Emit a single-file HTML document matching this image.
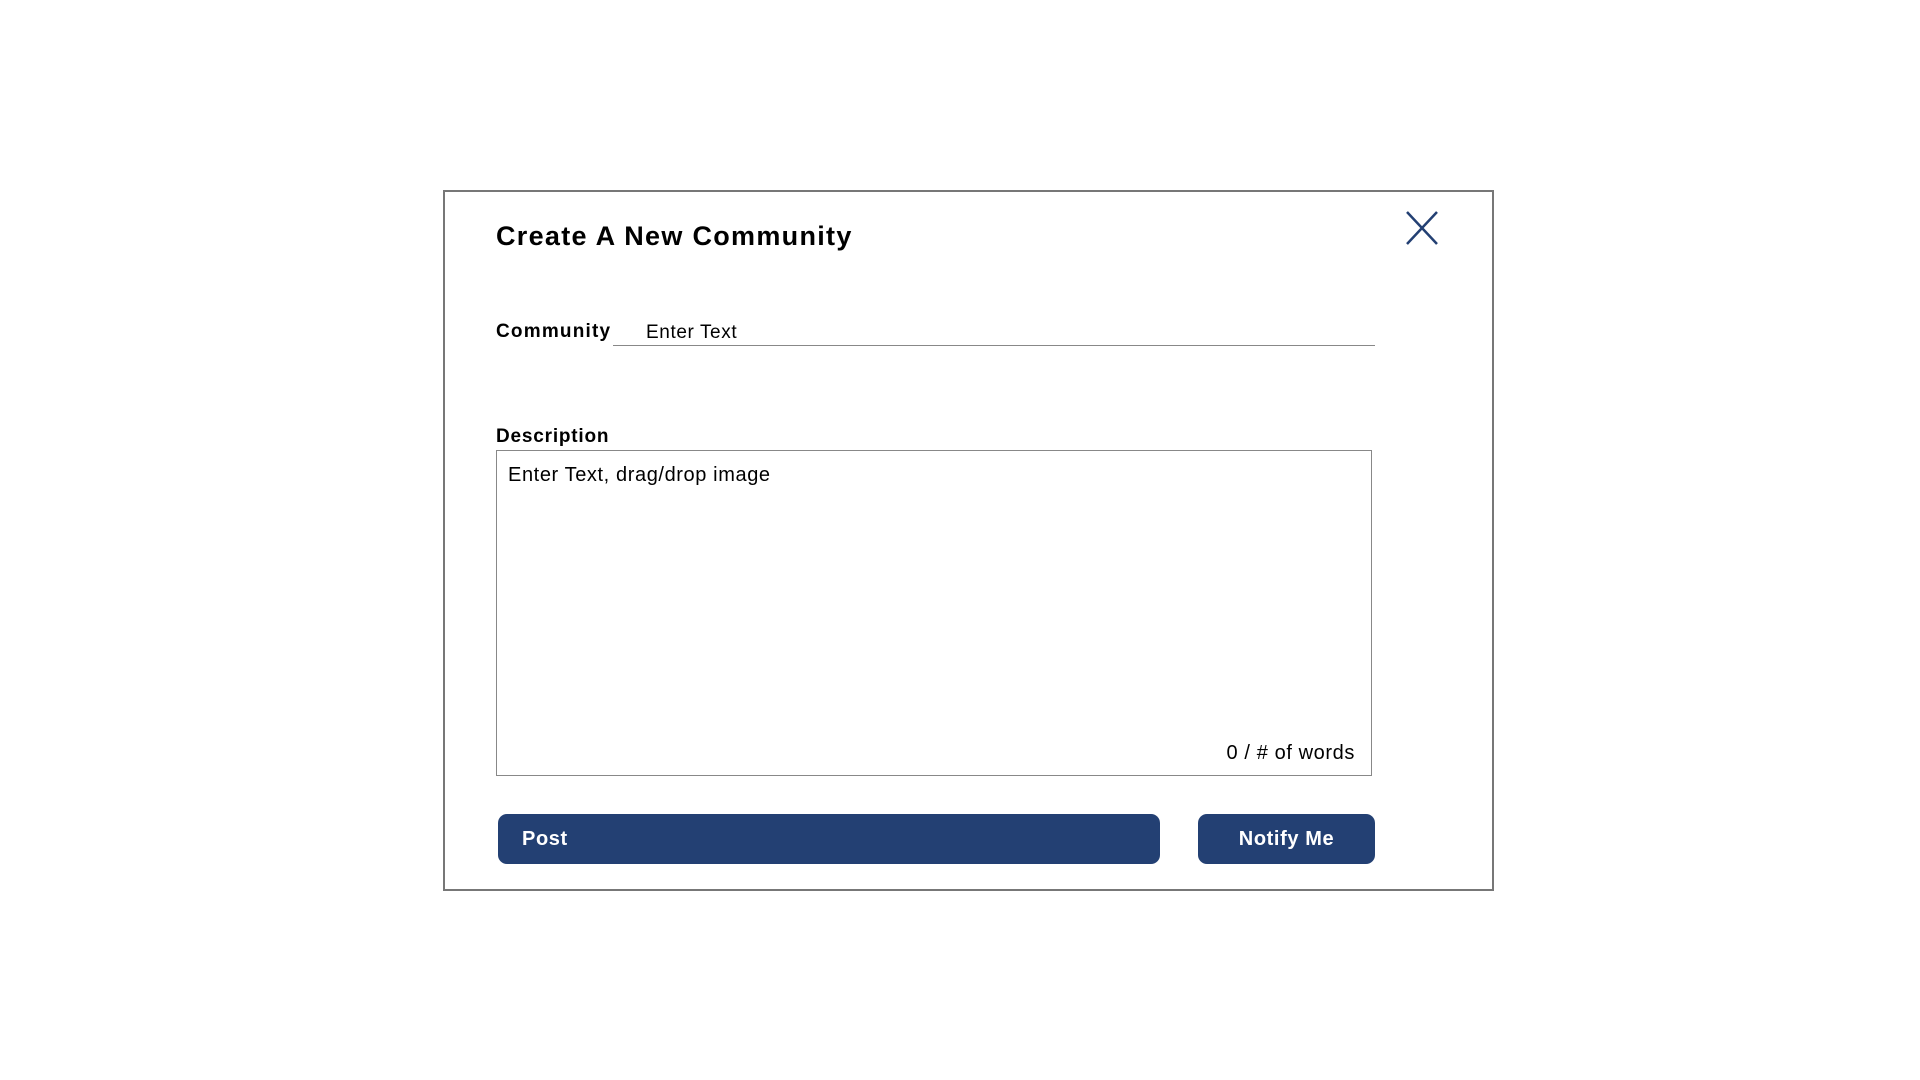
<!DOCTYPE html>
<html><head><meta charset="utf-8"><style>
html,body{margin:0;padding:0;background:#fff;width:1920px;height:1080px;overflow:hidden;font-family:"Liberation Sans","Noto Sans CJK JP",sans-serif;color:#000}
.a{position:absolute}
#dlg{left:443px;top:190px;width:1047px;height:697px;border:2px solid #777}
.btn{background:#234073;border-radius:9px;color:#fff;font-weight:bold;font-size:20px;line-height:50px;letter-spacing:0.6px}
</style></head><body>
<div id="dlg" class="a"></div>
<div class="a" style="left:496px;top:216px;font-size:27px;font-weight:bold;line-height:40px;letter-spacing:1.3px">Create A New Community</div>
<svg class="a" style="left:1405px;top:210px" width="34" height="36"><path d="M2 2L32 34M32 2L2 34" stroke="#234073" stroke-width="2.5" fill="none"/></svg>
<div class="a" style="left:496px;top:318px;font-size:19px;font-weight:bold;line-height:28px;letter-spacing:1.2px">Community</div>
<div class="a" style="left:646px;top:319px;font-size:19px;line-height:28px;letter-spacing:0.6px">Enter Text</div>
<div class="a" style="left:613px;top:345px;width:762px;height:1px;background:#888"></div>
<div class="a" style="left:496px;top:423px;font-size:19px;font-weight:bold;line-height:28px;letter-spacing:0.8px">Description</div>
<div class="a" style="left:496px;top:450px;width:874px;height:324px;border:1px solid #888"></div>
<div class="a" style="left:508px;top:461px;font-size:20px;line-height:28px;letter-spacing:0.6px">Enter Text, drag/drop image</div>
<div class="a" style="left:1050px;width:305px;text-align:right;top:739px;font-size:20px;line-height:28px;letter-spacing:0.6px">0 / # of words</div>
<div class="a btn" style="left:498px;top:814px;width:638px;height:50px;padding-left:24px">Post</div>
<div class="a btn" style="left:1198px;top:814px;width:177px;height:50px;text-align:center">Notify Me</div>
</body></html>
